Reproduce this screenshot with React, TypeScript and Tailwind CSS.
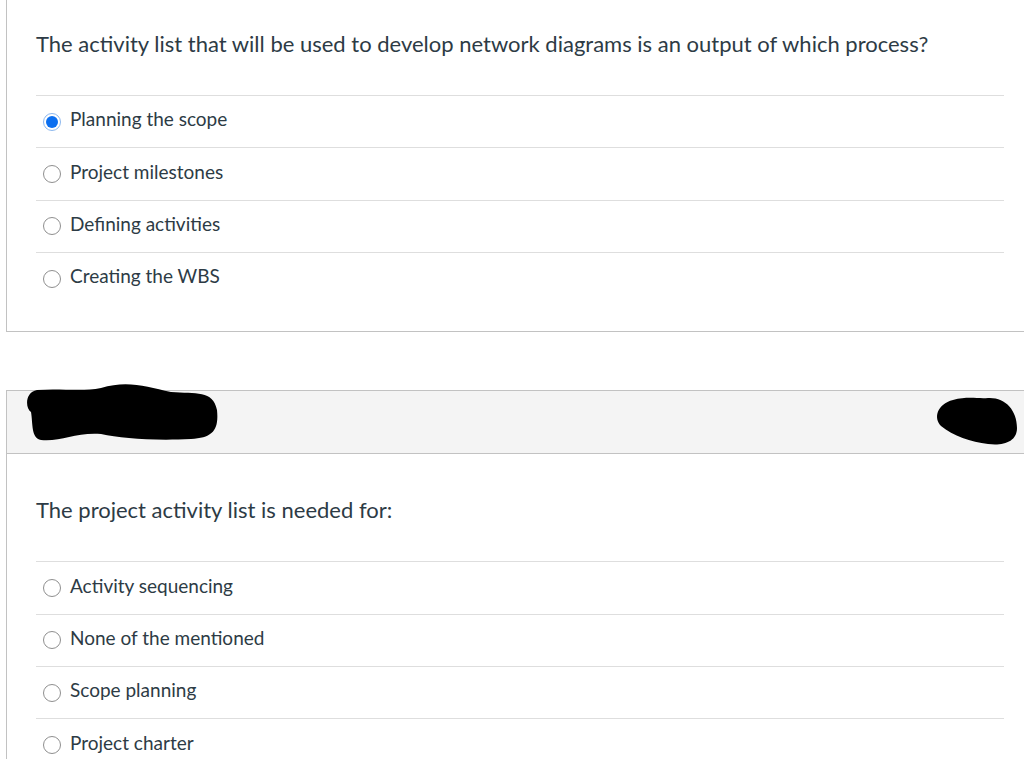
import React from 'react';

type Question = {
  id: number;
  text: string;
  answers: string[];
  selected?: number;
};

const questions: Question[] = [
  {
    id: 1,
    text: 'The activity list that will be used to develop network diagrams is an output of which process?',
    answers: ['Planning the scope', 'Project milestones', 'Defining activities', 'Creating the WBS'],
    selected: 0,
  },
  {
    id: 2,
    text: 'The project activity list is needed for:',
    answers: ['Activity sequencing', 'None of the mentioned', 'Scope planning', 'Project charter'],
  },
];

const Radio: React.FC<{ checked?: boolean }> = ({ checked }) =>
  checked ? (
    <span className="flex h-[18px] w-[18px] shrink-0 items-center justify-center rounded-full border border-[#8db8ee] bg-white">
      <span className="h-[12px] w-[12px] rounded-full bg-[#0b6ff0]" />
    </span>
  ) : (
    <span className="h-[18px] w-[18px] shrink-0 rounded-full border border-[#8f8f8f] bg-white" />
  );

const AnswerList: React.FC<{ q: Question }> = ({ q }) => (
  <ul>
    {q.answers.map((a, i) => (
      <li key={a} className="flex h-[52.33px] items-center gap-[9px] border-t border-[#dedede] pl-[7px]">
        <Radio checked={q.selected === i} />
        <span className="pb-[4px] text-[19px] text-[#2d3b45]">{a}</span>
      </li>
    ))}
  </ul>
);

// redaction blobs over the header bar
const Redactions: React.FC = () => (
  <>
    <svg className="absolute left-[14px] top-[-9px]" width="200" height="70" viewBox="0 0 200 70" preserveAspectRatio="none">
      <path
        d="M16 8 C40 6 60 10 80 6 C105 -2 125 4 150 10 C175 12 192 8 196 28 C198 48 192 56 170 57 C130 59 100 56 80 52 C55 50 40 60 20 58 C10 56 12 42 10 30 C4 26 4 10 16 8 Z"
        fill="#000"
      />
    </svg>
    <svg className="absolute left-[926px] top-[5px]" width="86" height="52" viewBox="0 0 86 52">
      <path
        d="M20 4 C35 0 45 3 55 2 C72 1 84 14 84 32 C84 46 70 50 55 48 C38 46 20 40 8 30 C0 22 4 8 20 4 Z"
        fill="#000"
      />
    </svg>
  </>
);

export default function App() {
  const [q1, q2] = questions;
  return (
    <div className="h-[759px] w-[1024px] overflow-hidden bg-white font-['Lato','Liberation_Sans',sans-serif] text-[#2d3b45]">
      <div className="ml-[6px] w-[1027px] border-b border-l border-[#c2c2c2] px-[29px] pb-[27px] pt-[29px]">
        <p className="mb-[36px] text-[22px] leading-[30px]">{q1.text}</p>
        <AnswerList q={q1} />
      </div>

      <div className="ml-[6px] mt-[58px] w-[1027px] border-l border-t border-[#c2c2c2]">
        <div className="relative h-[63px] border-b border-[#c2c2c2] bg-[#f4f4f4]">
          <Redactions />
        </div>
        <div className="px-[29px] pt-[41px]">
          <p className="mb-[36px] text-[22px] leading-[30px]">{q2.text}</p>
          <AnswerList q={q2} />
        </div>
      </div>
    </div>
  );
}
